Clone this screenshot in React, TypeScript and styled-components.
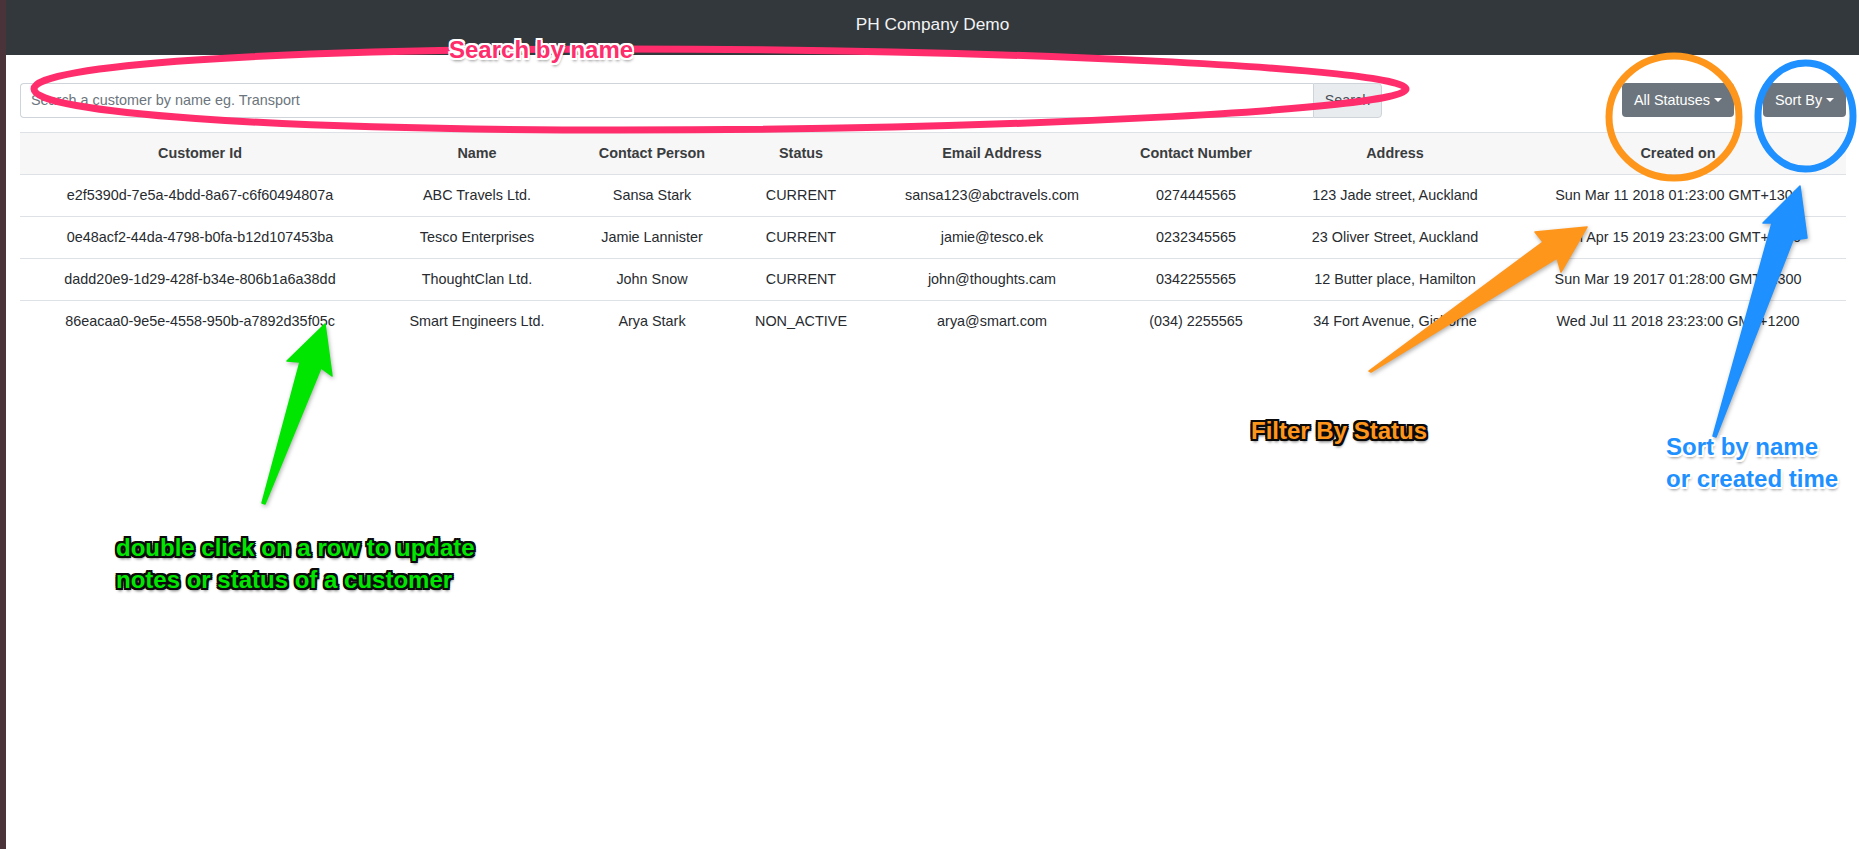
import * as React from "react"
import styled, { createGlobalStyle } from "styled-components"

const GlobalStyle = createGlobalStyle`
  html, body { margin: 0; padding: 0; background: #fff; }
  body { font-family: "Liberation Sans", Arial, sans-serif; font-size: 14.4px; line-height: 21px; color: #272b2f; }
`

const Page = styled.div`
  position: relative;
  display: flex;
  height: 849px;
  overflow: hidden;
`

const Strip = styled.div`
  flex: 0 0 6px;
  background: #4a343a;
`

const Main = styled.div`
  flex: 1;
  display: flex;
  flex-direction: column;
  min-width: 0;
`

const TopBar = styled.header`
  height: 55px;
  flex: none;
  background: #32383c;
  color: #f2f3f4;
  font-size: 17.28px;
  display: flex;
  align-items: center;
  justify-content: center;
  padding-bottom: 7px;
  box-sizing: border-box;
`

const Toolbar = styled.div`
  display: flex;
  align-items: flex-start;
  padding: 28px 13px 14px 14px;
`

const SearchGroup = styled.div`
  flex: 0 0 1362px;
  display: flex;
  height: 35px;
  margin-right: auto;
`

const SearchInput = styled.input`
  flex: 1;
  box-sizing: border-box;
  height: 100%;
  padding: 0 10px 2px;
  font: inherit;
  color: #495057;
  border: 1px solid #ced4da;
  border-right: 0;
  border-radius: 4px 0 0 4px;
  outline: none;
  &::placeholder { color: #6c757d; opacity: 1; }
`

const SearchButton = styled.div`
  flex: 0 0 69px;
  box-sizing: border-box;
  display: flex;
  align-items: center;
  justify-content: center;
  color: #495057;
  background: #e9ecef;
  border: 1px solid #ced4da;
  border-radius: 0 4px 4px 0;
`

const DropButton = styled.button<{ $width: number; $gap?: number }>`
  width: ${p => p.$width}px;
  margin-left: ${p => p.$gap ?? 0}px;
  height: 34px;
  padding: 0;
  border: 0;
  border-radius: 4px;
  background: #6c757d;
  color: #fff;
  font: inherit;
  &::after {
    content: "";
    display: inline-block;
    margin-left: 4px;
    vertical-align: 3px;
    border-top: 4px solid #fff;
    border-left: 4px solid transparent;
    border-right: 4px solid transparent;
  }
`

const TableWrap = styled.div`
  padding: 0 13px 0 14px;
`

const Table = styled.table`
  width: 100%;
  table-layout: fixed;
  border-collapse: collapse;
  text-align: center;
`

const HeadCell = styled.th<{ $width: number }>`
  width: ${p => p.$width}px;
  height: 42px;
  padding: 0;
  font-weight: 700;
  color: #3a3d40;
  background: #f7f7f7;
  border-top: 1px solid #dee2e6;
  border-bottom: 1px solid #dee2e6;
  box-sizing: border-box;
`

const Cell = styled.td`
  height: 42px;
  padding: 0;
  box-sizing: border-box;
  white-space: nowrap;
`

const Row = styled.tr`
  & + & ${Cell} { border-top: 1px solid #dee2e6; }
`

const Overlay = styled.svg`
  position: absolute;
  left: 0;
  top: 0;
  pointer-events: none;
`

const Arrow = styled.path<{ $color: string }>`
  fill: ${p => p.$color};
  stroke: ${p => p.$color};
  stroke-width: 1.5;
  stroke-linejoin: round;
  filter: drop-shadow(1px 2px 2px rgba(0, 0, 0, 0.3));
`

const Ring = styled.ellipse<{ $color: string }>`
  fill: none;
  stroke: ${p => p.$color};
  stroke-width: 7;
`

const Loop = styled.path<{ $color: string }>`
  fill: none;
  stroke: ${p => p.$color};
  stroke-width: 7;
`

const halo = (c: string, r: number) =>
  [[-r, 0], [r, 0], [0, -r], [0, r], [-r, -r], [r, -r], [-r, r], [r, r]]
    .map(([x, y]) => `${x}px ${y}px 0.5px ${c}`)
    .join(", ")

const Note = styled.div<{ $x: number; $y: number; $color: string; $dark?: boolean }>`
  position: absolute;
  left: ${p => p.$x}px;
  top: ${p => p.$y}px;
  color: ${p => p.$color};
  font-size: 24px;
  font-weight: 700;
  line-height: 32px;
  white-space: nowrap;
  text-shadow: ${p => p.$dark
    ? `${halo("#0a0a0a", 2)}, 1px 3px 3px rgba(0,0,0,0.6)`
    : `${halo("#fff", 1.8)}, 1px 3px 3px rgba(0,0,0,0.45)`};
`

const columns: [string, number][] = [
  ["Customer Id", 360],
  ["Name", 194],
  ["Contact Person", 156],
  ["Status", 142],
  ["Email Address", 240],
  ["Contact Number", 168],
  ["Address", 230],
  ["Created on", 336],
]

const customers = [
  ["e2f5390d-7e5a-4bdd-8a67-c6f60494807a", "ABC Travels Ltd.", "Sansa Stark", "CURRENT", "sansa123@abctravels.com", "0274445565", "123 Jade street, Auckland", "Sun Mar 11 2018 01:23:00 GMT+1300"],
  ["0e48acf2-44da-4798-b0fa-b12d107453ba", "Tesco Enterprises", "Jamie Lannister", "CURRENT", "jamie@tesco.ek", "0232345565", "23 Oliver Street, Auckland", "Mon Apr 15 2019 23:23:00 GMT+1200"],
  ["dadd20e9-1d29-428f-b34e-806b1a6a38dd", "ThoughtClan Ltd.", "John Snow", "CURRENT", "john@thoughts.cam", "0342255565", "12 Butter place, Hamilton", "Sun Mar 19 2017 01:28:00 GMT+1300"],
  ["86eacaa0-9e5e-4558-950b-a7892d35f05c", "Smart Engineers Ltd.", "Arya Stark", "NON_ACTIVE", "arya@smart.com", "(034) 2255565", "34 Fort Avenue, Gisborne", "Wed Jul 11 2018 23:23:00 GMT+1200"],
]

const App: React.FC = () => {
  return <Page>
    <GlobalStyle />
    <Strip />
    <Main>
      <TopBar>PH Company Demo</TopBar>
      <Toolbar>
        <SearchGroup>
          <SearchInput placeholder="Search a customer by name eg. Transport" />
          <SearchButton>Search</SearchButton>
        </SearchGroup>
        <DropButton $width={112}>All Statuses</DropButton>
        <DropButton $width={83} $gap={29}>Sort By</DropButton>
      </Toolbar>
      <TableWrap>
        <Table>
          <thead>
            <tr>{columns.map(([name, width]) => <HeadCell key={name} $width={width}>{name}</HeadCell>)}</tr>
          </thead>
          <tbody>
            {customers.map(row => <Row key={row[0]}>
              {row.map(value => <Cell key={value}>{value}</Cell>)}
            </Row>)}
          </tbody>
        </Table>
      </TableWrap>
    </Main>

    <Overlay width="1859" height="849" viewBox="0 0 1859 849">
      <Loop $color="#ff2d6b" d="M34 89 C34 65 270 49 620 49 C1000 49 1406 68 1406 89 C1406 110 1000 130 620 130 C270 130 34 113 34 89 Z" />
      <Ring $color="#ff961c" cx="1674" cy="117" rx="65" ry="61" />
      <Ring $color="#1e90ff" cx="1805.5" cy="116" rx="47.5" ry="53" />
      <Arrow $color="#ff961c" d="M1587 227 L1535 232 L1543 242 L1369 371 L1371 372 L1557 258 L1561 272 Z" />
      <Arrow $color="#1e90ff" d="M1800 186 L1763 223 L1772 223 L1713 436 L1716 437 L1793 240 L1807 238 Z" />
      <Arrow $color="#00e600" d="M325 324 L287 361 L300 362 L262 503 L265 504 L321 368 L332 376 Z" />
    </Overlay>

    <Note $x={449} $y={34} $color="#ff2d6b">Search by name</Note>
    <Note $x={1251} $y={415} $color="#ff961c" $dark>Filter By Status</Note>
    <Note $x={1666} $y={431} $color="#1e90ff">Sort by name<br />or created time</Note>
    <Note $x={116} $y={532} $color="#00e600" $dark>double click on a row to update<br />notes or status of a customer</Note>
  </Page>
}

export default App
